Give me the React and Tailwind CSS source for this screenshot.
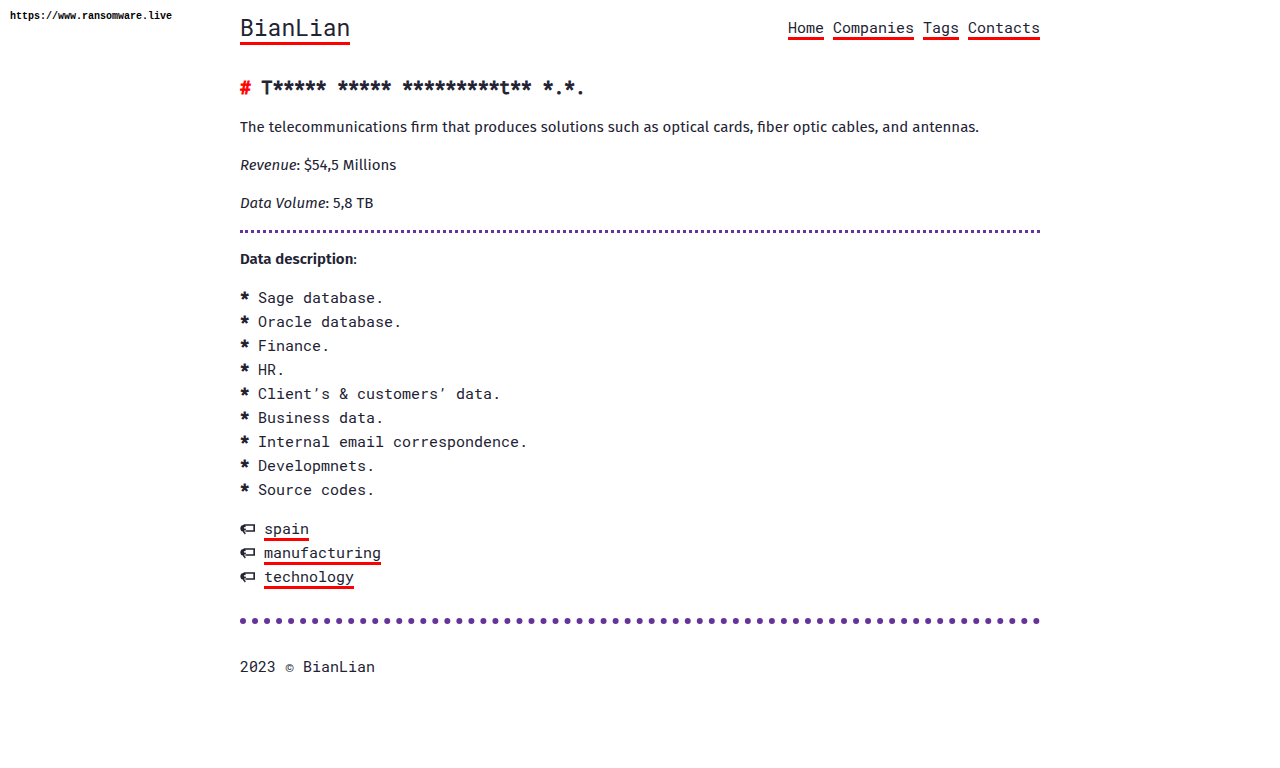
import React from 'react';

const navigation = ['Home', 'Companies', 'Tags', 'Contacts'];

const dataItems = [
  'Sage database.',
  'Oracle database.',
  'Finance.',
  'HR.',
  'Client’s & customers’ data.',
  'Business data.',
  'Internal email correspondence.',
  'Developmnets.',
  'Source codes.',
];

const tags = ['spain', 'manufacturing', 'technology'];

function TagIcon() {
  return (
    <svg
      className="h-[15px] w-[15px] shrink-0"
      viewBox="0 0 15 15"
      fill="none"
      stroke="currentColor"
      aria-hidden="true"
    >
      <path d="M4.5 4H14.2V10H5.5" strokeWidth="1.7" />
      <path d="M5 4L2.2 5.2C1 6.2 1 8 1.8 9.4L3.4 10M5.6 5.4C4 4.8 2.8 5.6 2.8 7.2S4.4 9.4 5.6 7.8M3.6 6.5C2.8 8.6 3.2 11 5.4 12.8" strokeWidth="1.6" />
    </svg>
  );
}

function TextLink({ href, children }) {
  return (
    <a href={href} className="border-b-3 border-[#ff0000]">
      {children}
    </a>
  );
}

export default function App() {
  return (
    <div className="bg-white font-['Roboto_Mono','Liberation_Mono',monospace] text-[15px] leading-6 text-[#222233]">
      <span className="absolute top-[9px] left-2.5 font-['Liberation_Mono',monospace] text-[10px] leading-4 font-bold text-black">
        https://www.ransomware.live
      </span>
      <div className="mx-auto max-w-[800px]">
        <header className="flex items-center justify-between pt-[15px]">
          <div className="text-[23px]">
            <TextLink href="#home">BianLian</TextLink>
          </div>
          <nav className="flex gap-[9px]">
            {navigation.map((item) => (
              <div key={item}>
                <TextLink href={'#' + item.toLowerCase()}>{item}</TextLink>
              </div>
            ))}
          </nav>
        </header>

        <main className="pt-9">
          <h1 className="text-[18px] font-normal [-webkit-text-stroke:1px]">
            <span className="text-[#ff0000]">#</span> T***** ***** *********t** *.*.
          </h1>
          <section className="mt-[17px] flex flex-col gap-[15px] font-['Fira_Sans','Noto_Sans',sans-serif] leading-[23px]">
            <p>
              The telecommunications firm that produces solutions such as optical cards, fiber optic
              cables, and antennas.
            </p>
            <p>
              <em>Revenue</em>: $54,5 Millions
            </p>
            <p>
              <em>Data Volume</em>: 5,8 TB
            </p>
            <hr className="border-t-3 border-dotted border-[#663399]" />
            <p>
              <strong className="font-semibold">Data description</strong>:
            </p>
          </section>
          <ul className="mt-[14px]">
            {dataItems.map((item) => (
              <li key={item} className="flex gap-[9px]">
                <b className="font-normal [-webkit-text-stroke:1px]" aria-hidden="true">*</b>
                <span>{item}</span>
              </li>
            ))}
          </ul>
          <ul className="mt-[15px]">
            {tags.map((tag) => (
              <li key={tag} className="flex items-center gap-[9px]">
                <TagIcon />
                <span>
                  <TextLink href={'#' + tag}>{tag}</TextLink>
                </span>
              </li>
            ))}
          </ul>
        </main>

        <footer className="mt-[30px] border-t-6 border-dotted border-[#663399] pt-[30px]">
          <p>2023 © BianLian</p>
        </footer>
      </div>
    </div>
  );
}
